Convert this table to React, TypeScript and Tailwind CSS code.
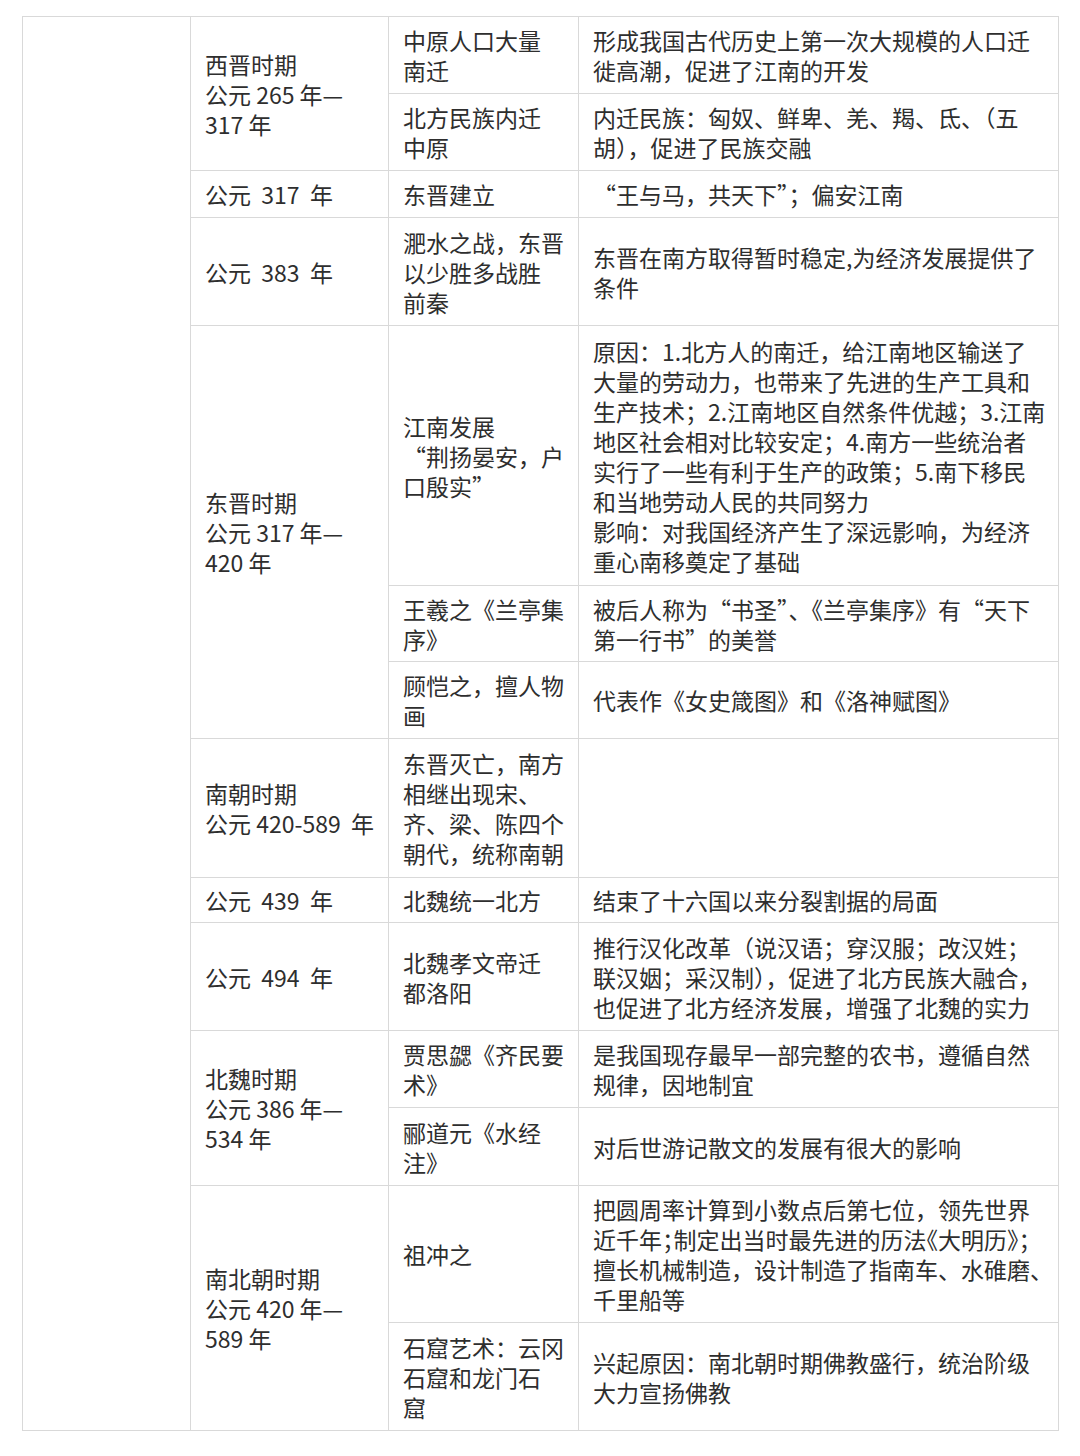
import type { ReactNode } from "react"

type Sub = { event: string[]; note: string[]; h: number; tight?: number[] }
type Group = { period: string[]; subs: Sub[] }

const GROUPS: Group[] = [
  {
    period: ["西晋时期", "公元 265 年—", "317 年"],
    subs: [
      {
        event: ["中原人口大量", "南迁"],
        note: ["形成我国古代历史上第一次大规模的人口迁", "徙高潮，促进了江南的开发"],
        h: 77,
      },
      {
        event: ["北方民族内迁", "中原"],
        note: ["内迁民族：匈奴、鲜卑、羌、羯、氐、（五", "胡），促进了民族交融"],
        h: 77,
      },
    ],
  },
  {
    period: ["公元  317  年"],
    subs: [{ event: ["东晋建立"], note: ["“王与马，共天下”；偏安江南"], h: 47 }],
  },
  {
    period: ["公元  383  年"],
    subs: [
      {
        event: ["淝水之战，东晋", "以少胜多战胜", "前秦"],
        note: ["东晋在南方取得暂时稳定,为经济发展提供了", "条件"],
        h: 108,
      },
    ],
  },
  {
    period: ["东晋时期", "公元 317 年—", "420 年"],
    subs: [
      {
        event: ["江南发展", "“荆扬晏安，户", "口殷实”"],
        note: [
          "原因：1.北方人的南迁，给江南地区输送了",
          "大量的劳动力，也带来了先进的生产工具和",
          "生产技术；2.江南地区自然条件优越；3.江南",
          "地区社会相对比较安定；4.南方一些统治者",
          "实行了一些有利于生产的政策；5.南下移民",
          "和当地劳动人民的共同努力",
          "影响：对我国经济产生了深远影响，为经济",
          "重心南移奠定了基础",
        ],
        h: 260,
      },
      {
        event: ["王羲之《兰亭集", "序》"],
        note: ["被后人称为“书圣”、《兰亭集序》有“天下", "第一行书”的美誉"],
        h: 76,
      },
      {
        event: ["顾恺之，擅人物", "画"],
        note: ["代表作《女史箴图》和《洛神赋图》"],
        h: 77,
      },
    ],
  },
  {
    period: ["南朝时期", "公元 420-589  年"],
    subs: [
      {
        event: ["东晋灭亡，南方", "相继出现宋、", "齐、梁、陈四个", "朝代，统称南朝"],
        note: [],
        h: 139,
      },
    ],
  },
  {
    period: ["公元  439  年"],
    subs: [{ event: ["北魏统一北方"], note: ["结束了十六国以来分裂割据的局面"], h: 45 }],
  },
  {
    period: ["公元  494  年"],
    subs: [
      {
        event: ["北魏孝文帝迁", "都洛阳"],
        note: [
          "推行汉化改革（说汉语；穿汉服；改汉姓；",
          "联汉姻；采汉制），促进了北方民族大融合，",
          "也促进了北方经济发展，增强了北魏的实力",
        ],
        h: 108,
      },
    ],
  },
  {
    period: ["北魏时期", "公元 386 年—", "534 年"],
    subs: [
      {
        event: ["贾思勰《齐民要", "术》"],
        note: ["是我国现存最早一部完整的农书，遵循自然", "规律，因地制宜"],
        h: 77,
      },
      {
        event: ["郦道元《水经", "注》"],
        note: ["对后世游记散文的发展有很大的影响"],
        h: 78,
      },
    ],
  },
  {
    period: ["南北朝时期", "公元 420 年—", "589 年"],
    subs: [
      {
        event: ["祖冲之"],
        note: [
          "把圆周率计算到小数点后第七位，领先世界",
          "近千年；制定出当时最先进的历法《大明历》；",
          "擅长机械制造，设计制造了指南车、水碓磨、",
          "千里船等",
        ],
        h: 137,
        tight: [1],
      },
      {
        event: ["石窟艺术：云冈", "石窟和龙门石", "窟"],
        note: ["兴起原因：南北朝时期佛教盛行，统治阶级", "大力宣扬佛教"],
        h: 108,
      },
    ],
  },
]

function Lines({ lines, tight = [] }: { lines: string[]; tight?: number[] }) {
  return (
    <>
      {lines.map((l, i) => (
        <div
          key={i}
          className={tight.includes(i) ? "whitespace-pre [font-feature-settings:'halt']" : "whitespace-pre"}
        >
          {l}
        </div>
      ))}
    </>
  )
}

function Cell({ children, rowSpan }: { children?: ReactNode; rowSpan?: number }) {
  return (
    <td rowSpan={rowSpan} className="border border-[#d9d9d9] px-[14px] py-[7px] align-middle">
      {children}
    </td>
  )
}

export default function App() {
  const total = GROUPS.reduce((n, g) => n + g.subs.length, 0)

  return (
    <div
      className="min-h-[1456px] w-[1080px] bg-white pl-[22px] pt-[16px] text-[23px] leading-[30px] text-[#2e2e2e]"
      style={{ fontFamily: '"Noto Sans CJK SC", sans-serif' }}
    >
      <table className="w-[1036px] table-fixed border-collapse">
        <colgroup>
          <col className="w-[168px]" />
          <col className="w-[198px]" />
          <col className="w-[190px]" />
          <col className="w-[480px]" />
        </colgroup>
        <tbody>
          {GROUPS.map((g, gi) =>
            g.subs.map((s, si) => (
              <tr key={`${gi}-${si}`} style={{ height: s.h }}>
                {gi === 0 && si === 0 && <Cell rowSpan={total} />}
                {si === 0 && (
                  <Cell rowSpan={g.subs.length}>
                    <Lines lines={g.period} />
                  </Cell>
                )}
                <Cell>
                  <Lines lines={s.event} />
                </Cell>
                <Cell>
                  <Lines lines={s.note} tight={s.tight} />
                </Cell>
              </tr>
            )),
          )}
        </tbody>
      </table>
    </div>
  )
}
